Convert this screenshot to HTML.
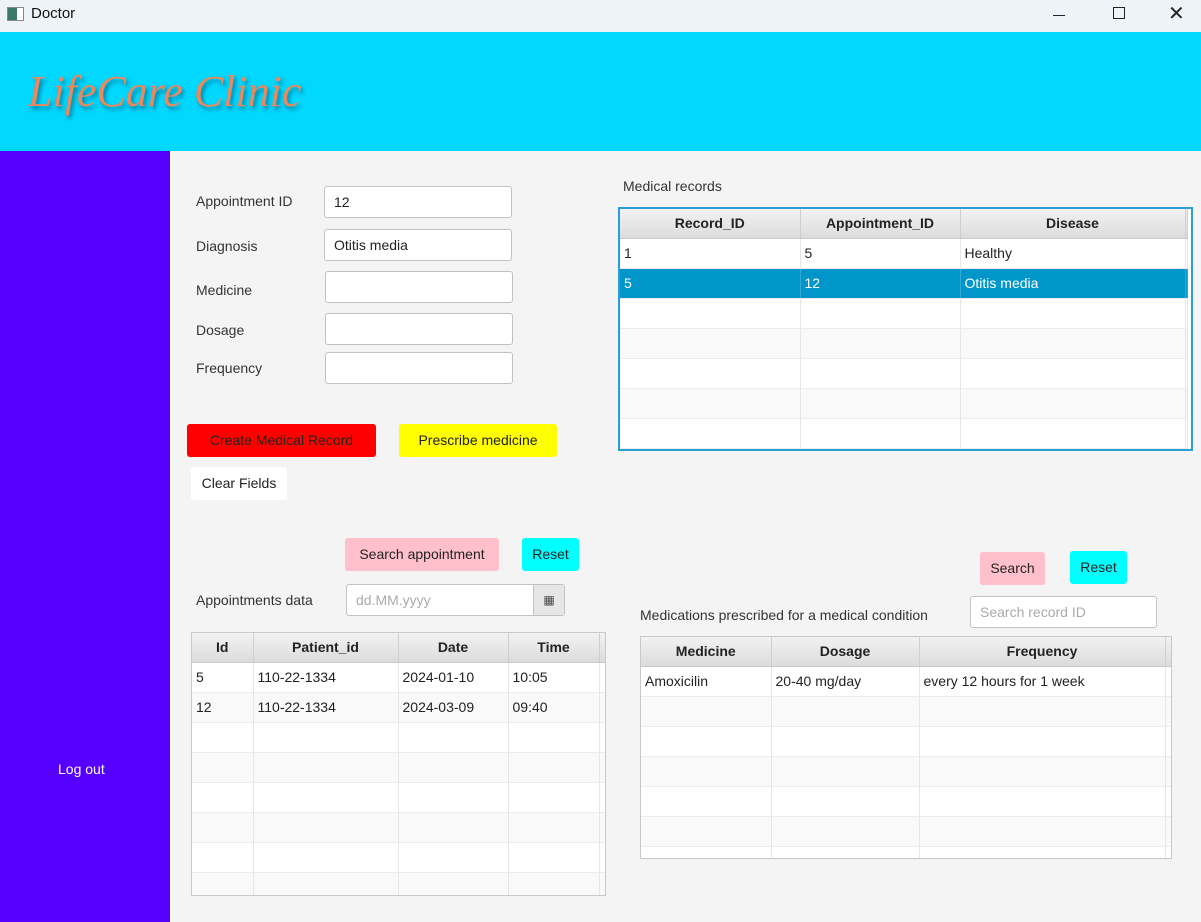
<!DOCTYPE html><html><head><style>
*{box-sizing:border-box;margin:0;padding:0}
body{width:1201px;height:922px;position:relative;overflow:hidden;background:#f4f4f4;font-family:"Liberation Sans",sans-serif;font-size:14px;color:#333}
.a{position:absolute}
.lbl{position:absolute;font-size:14px;color:#333}
.inp{position:absolute;background:#fff;border:1px solid #c2c2c2;border-radius:3px;height:32px;padding:0 9px;line-height:30px;font-size:14px;color:#222}
.btn{position:absolute;height:33px;line-height:33px;text-align:center;font-size:14px;color:#222;border-radius:3px}
table{border-collapse:collapse;table-layout:fixed;font-size:14px}
td,th{border-right:1px solid #e6e6e6;height:30px;padding:0 4px;white-space:nowrap;overflow:hidden;color:#222}
th{background:linear-gradient(#f2f2f2,#dcdcdc);font-weight:bold;height:29px;border-bottom:1px solid #c8c8c8;border-right:1px solid #cfcfcf;text-align:center}
tr.o td{background:#f9f9f9}
tr.s td{background:#0096c9;color:#fff;border-right-color:#33aad6}
td{border-bottom:1px solid #ececec;background:#fff}
</style></head><body>
<div class="a" style="left:0;top:0;width:1201px;height:32px;background:#eef3f7"></div>
<div class="a" style="left:7px;top:7px;width:17px;height:14px;border:1px solid #888;background:linear-gradient(90deg,#3a7a6a 60%,#fff 60%)"></div>
<div class="a" style="left:31px;top:5px;font-size:15px;color:#111">Doctor</div>
<div class="a" style="left:1053px;top:15px;width:12px;height:1px;background:#222"></div>
<div class="a" style="left:1113px;top:7px;width:12px;height:12px;border:1px solid #222"></div>
<div class="a" style="left:1168px;top:1px;font-size:20px;color:#222">✕</div>
<div class="a" style="left:0;top:32px;width:1201px;height:119px;background:#00d8ff"></div>
<div class="a" style="left:28px;top:66px;font-family:'Liberation Serif',serif;font-style:italic;font-size:44px;color:#e8895e;text-shadow:2px 3px 4px rgba(0,60,90,.6)">LifeCare Clinic</div>
<div class="a" style="left:0;top:151px;width:170px;height:771px;background:#5500ff"></div>
<div class="a" style="left:58px;top:761px;color:#fff;font-size:14px">Log out</div>

<div class="lbl" style="left:196px;top:193px">Appointment ID</div>
<div class="inp" style="left:324px;top:186px;width:188px">12</div>
<div class="lbl" style="left:196px;top:238px">Diagnosis</div>
<div class="inp" style="left:324px;top:229px;width:188px">Otitis media</div>
<div class="lbl" style="left:196px;top:282px">Medicine</div>
<div class="inp" style="left:325px;top:271px;width:188px"></div>
<div class="lbl" style="left:196px;top:322px">Dosage</div>
<div class="inp" style="left:325px;top:313px;width:188px"></div>
<div class="lbl" style="left:196px;top:360px">Frequency</div>
<div class="inp" style="left:325px;top:352px;width:188px"></div>

<div class="btn" style="left:187px;top:424px;width:189px;background:#ff0000">Create Medical Record</div>
<div class="btn" style="left:399px;top:424px;width:158px;background:#ffff00">Prescribe medicine</div>
<div class="btn" style="left:191px;top:467px;width:96px;background:#fff">Clear Fields</div>

<div class="btn" style="left:345px;top:538px;width:154px;background:#ffc0cb">Search appointment</div>
<div class="btn" style="left:522px;top:538px;width:57px;background:#00ffff">Reset</div>
<div class="lbl" style="left:196px;top:592px">Appointments data</div>
<div class="inp" style="left:346px;top:584px;width:219px;color:#aaa">dd.MM.yyyy</div>
<div class="a" style="left:533px;top:585px;width:31px;height:30px;background:#e6e6e6;border-left:1px solid #c2c2c2;text-align:center;line-height:30px;font-size:12px;color:#444">▦</div>

<div class="lbl" style="left:623px;top:178px">Medical records</div>
<div class="a" style="left:618px;top:207px;width:575px;height:244px;border:2px solid #2a9fd6;background:#fff;overflow:hidden">
<table style="width:567px"><colgroup><col style="width:180px"><col style="width:160px"><col style="width:225px"><col style="width:2px"></colgroup>
<tr><th>Record_ID</th><th>Appointment_ID</th><th>Disease</th><th></th></tr>
<tr><td>1</td><td>5</td><td>Healthy</td><td></td></tr>
<tr class="s"><td>5</td><td>12</td><td>Otitis media</td><td></td></tr>
<tr><td></td><td></td><td></td><td></td></tr>
<tr class="o"><td></td><td></td><td></td><td></td></tr>
<tr><td></td><td></td><td></td><td></td></tr>
<tr class="o"><td></td><td></td><td></td><td></td></tr>
<tr><td></td><td></td><td></td><td></td></tr>
</table></div>

<div class="a" style="left:191px;top:632px;width:415px;height:264px;border:1px solid #c8c8c8;background:#fff;overflow:hidden">
<table style="width:413px"><colgroup><col style="width:61px"><col style="width:145px"><col style="width:110px"><col style="width:91px"><col style="width:6px"></colgroup>
<tr><th>Id</th><th>Patient_id</th><th>Date</th><th>Time</th><th></th></tr>
<tr><td>5</td><td>110-22-1334</td><td>2024-01-10</td><td>10:05</td><td></td></tr>
<tr class="o"><td>12</td><td>110-22-1334</td><td>2024-03-09</td><td>09:40</td><td></td></tr>
<tr><td></td><td></td><td></td><td></td><td></td></tr>
<tr class="o"><td></td><td></td><td></td><td></td><td></td></tr>
<tr><td></td><td></td><td></td><td></td><td></td></tr>
<tr class="o"><td></td><td></td><td></td><td></td><td></td></tr>
<tr><td></td><td></td><td></td><td></td><td></td></tr>
<tr class="o"><td></td><td></td><td></td><td></td><td></td></tr>
</table></div>

<div class="btn" style="left:980px;top:552px;width:65px;background:#ffc0cb">Search</div>
<div class="btn" style="left:1070px;top:551px;width:57px;background:#00ffff">Reset</div>
<div class="lbl" style="left:640px;top:607px">Medications prescribed for a medical condition</div>
<div class="inp" style="left:970px;top:596px;width:187px;color:#aaa">Search record ID</div>

<div class="a" style="left:640px;top:636px;width:532px;height:223px;border:1px solid #c8c8c8;background:#fff;overflow:hidden">
<table style="width:530px"><colgroup><col style="width:130px"><col style="width:148px"><col style="width:246px"><col style="width:6px"></colgroup>
<tr><th>Medicine</th><th>Dosage</th><th>Frequency</th><th></th></tr>
<tr><td>Amoxicilin</td><td>20-40 mg/day</td><td>every 12 hours for 1 week</td><td></td></tr>
<tr class="o"><td></td><td></td><td></td><td></td></tr>
<tr><td></td><td></td><td></td><td></td></tr>
<tr class="o"><td></td><td></td><td></td><td></td></tr>
<tr><td></td><td></td><td></td><td></td></tr>
<tr class="o"><td></td><td></td><td></td><td></td></tr>
<tr><td></td><td></td><td></td><td></td></tr>
</table></div>
</body></html>
